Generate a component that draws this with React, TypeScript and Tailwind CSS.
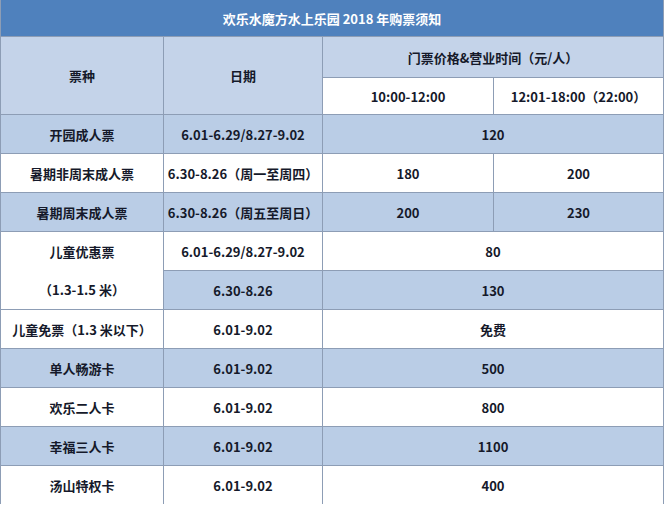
import React from "react";

type Row = {
  name: string;
  date: string;
  a: string;
  b?: string;
  blue: boolean;
};

const rows: Row[] = [
  { name: "开园成人票", date: "6.01-6.29/8.27-9.02", a: "120", blue: true },
  { name: "暑期非周末成人票", date: "6.30-8.26（周一至周四）", a: "180", b: "200", blue: false },
  { name: "暑期周末成人票", date: "6.30-8.26（周五至周日）", a: "200", b: "230", blue: true },
];

const rows2: Row[] = [
  { name: "儿童免票（1.3 米以下）", date: "6.01-9.02", a: "免费", blue: false },
  { name: "单人畅游卡", date: "6.01-9.02", a: "500", blue: true },
  { name: "欢乐二人卡", date: "6.01-9.02", a: "800", blue: false },
  { name: "幸福三人卡", date: "6.01-9.02", a: "1100", blue: true },
  { name: "汤山特权卡", date: "6.01-9.02", a: "400", blue: false },
];

const BLUE = "bg-[#bacde6]";
const WHITE = "bg-white";

function Cell({
  children,
  className = "",
}: {
  children?: React.ReactNode;
  className?: string;
}) {
  return (
    <div className={`flex items-center justify-center text-center ${className}`}>
      {children}
    </div>
  );
}

function renderRow(r: Row, i: number) {
  const bg = r.blue ? BLUE : WHITE;
  return (
    <React.Fragment key={r.name + i}>
      <Cell className={bg}>{r.name}</Cell>
      <Cell className={bg}>{r.date}</Cell>
      {r.b ? (
        <>
          <Cell className={bg}>{r.a}</Cell>
          <Cell className={bg}>{r.b}</Cell>
        </>
      ) : (
        <Cell className={`${bg} col-span-2`}>{r.a}</Cell>
      )}
    </React.Fragment>
  );
}

export default function App() {
  return (
    <div
      className="w-[667px] h-[506px] bg-white overflow-hidden"
      style={{ fontFamily: '"Noto Sans CJK SC", "Noto Sans", sans-serif' }}
    >
      <div className="w-[664px] bg-[#8d9db5] pl-px pr-px">
        <div className="grid grid-cols-[162px_158px_170px_1fr] grid-rows-[36px_40px_36px_repeat(10,38px)] gap-px text-[13px] font-bold text-[#15192a] leading-none">
          <Cell className="col-span-4 bg-[#4f81bd] text-white text-[13px]">
            欢乐水魔方水上乐园 2018 年购票须知
          </Cell>
          <Cell className="row-span-2 bg-[#c4d3e9]">票种</Cell>
          <Cell className="row-span-2 bg-[#c4d3e9]">日期</Cell>
          <Cell className="col-span-2 bg-[#c4d3e9]">门票价格&amp;营业时间（元/人）</Cell>
          <Cell className={WHITE}>10:00-12:00</Cell>
          <Cell className={WHITE}>12:01-18:00（22:00）</Cell>

          {rows.map(renderRow)}

          <div className="row-span-2 bg-white flex flex-col">
            <div className="flex-1 flex items-center justify-center">儿童优惠票</div>
            <div className="flex-1 flex items-center justify-center">（1.3-1.5 米）</div>
          </div>
          <Cell className={WHITE}>6.01-6.29/8.27-9.02</Cell>
          <Cell className={`${WHITE} col-span-2`}>80</Cell>
          <Cell className={BLUE}>6.30-8.26</Cell>
          <Cell className={`${BLUE} col-span-2`}>130</Cell>

          {rows2.map(renderRow)}
        </div>
      </div>
    </div>
  );
}
